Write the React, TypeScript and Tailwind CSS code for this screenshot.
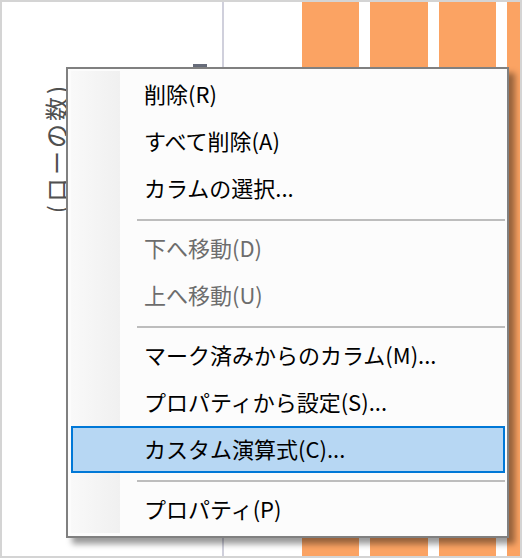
const items: ({ label: string; disabled?: boolean; active?: boolean } | "sep")[] = [
  { label: "削除(R)" },
  { label: "すべて削除(A)" },
  { label: "カラムの選択..." },
  "sep",
  { label: "下へ移動(D)", disabled: true },
  { label: "上へ移動(U)", disabled: true },
  "sep",
  { label: "マーク済みからのカラム(M)..." },
  { label: "プロパティから設定(S)..." },
  { label: "カスタム演算式(C)...", active: true },
  "sep",
  { label: "プロパティ(P)" },
];

function ContextMenu() {
  return (
    <div className="absolute left-[64px] top-[65px] box-border h-[471px] w-[443px] border-2 border-[#808080] bg-[#fcfcfc] pb-[3px] pl-[3px] pr-[2px] pt-[2px] shadow-[6px_6px_6px_rgba(0,0,0,0.4)]">
      <div className="flex h-full flex-col bg-[linear-gradient(to_right,#f9f9f9_0px,#f0f0f0_49px,#fcfcfc_49px)]">
        {items.map((item, i) =>
          item === "sep" ? (
            <div key={i} className="h-[13px] shrink-0 pl-[66px] pt-[7px]">
              <div className="h-[2px] bg-[#bdbdbd]" />
            </div>
          ) : (
            <div
              key={i}
              className={
                item.active
                  ? "flex h-[47px] shrink-0 items-center border-2 border-[#0078d7] bg-[#b7d7f3] pb-[3px] pl-[71px] text-black"
                  : item.disabled
                    ? "flex h-[47px] shrink-0 items-center border-2 border-transparent pb-[3px] pl-[71px] text-[#6d6d6d]"
                    : "flex h-[47px] shrink-0 items-center border-2 border-transparent pb-[3px] pl-[71px] text-black"
              }
            >
              {item.label}
            </div>
          ),
        )}
      </div>
    </div>
  );
}

export default function App() {
  return (
    <div className="relative box-border flex h-[558px] w-[522px] overflow-hidden border-2 border-[#d4d4d4] bg-white font-['Noto_Sans_CJK_JP',sans-serif] text-[22px] leading-none">
      <div className="flex w-[220px] shrink-0 flex-col">
        <div className="ml-[191px] mt-[62px] h-[3px] w-[14px] bg-[#676c7a]" />
        <div className="ml-[42px] mt-[16px] w-fit rotate-180 text-[24px] leading-none tracking-[3px] text-[#505050] [text-orientation:sideways] [writing-mode:vertical-rl]">
          (ローの数)
        </div>
      </div>
      <div className="w-[2px] shrink-0 bg-[#d0d0dc]" />
      <div className="w-[78px] shrink-0" />
      <div className="flex gap-[11px]">
        <div className="w-[57px] bg-[#fba363]" />
        <div className="w-[58px] bg-[#fba363]" />
        <div className="w-[57px] bg-[#fba363]" />
        <div className="w-[13px] bg-[#fba363]" />
      </div>
      <ContextMenu />
    </div>
  );
}
